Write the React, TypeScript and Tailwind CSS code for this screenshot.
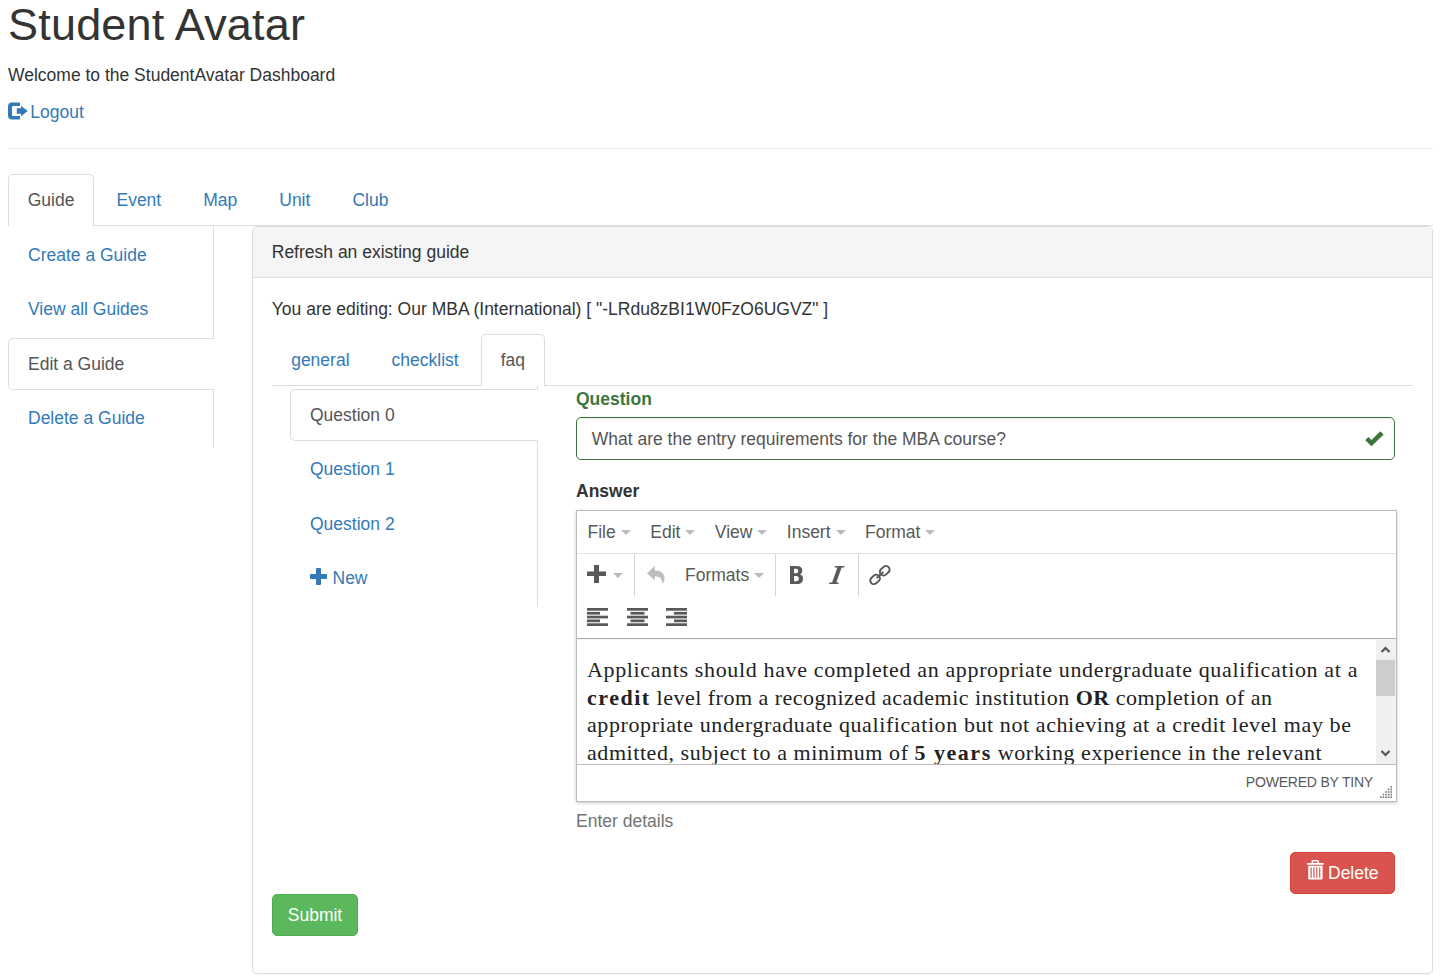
import React from "react";

const Caret = () => (
  <svg className="ml-[5px] shrink-0" width="10" height="5" viewBox="0 0 10 5">
    <path d="M0 0H10L5 5Z" fill="#b5bcc2" />
  </svg>
);

const LogoutIcon = () => (
  <svg width="20" height="18" viewBox="0 0 20 18" className="-mt-[4px] shrink-0">
    <path
      d="M12 .5V4H5Q4 4 4 5V13Q4 14 5 14H12V17.500H4Q0 17.500 0 13.500V4.500Q0 .5 4 .5Z"
      fill="#337ab7"
    />
    <path d="M13 3.800L19.800 9L13 14.200V11.800H8.800V6.300H13Z" fill="#337ab7" />
  </svg>
);

const PlusIcon = () => (
  <svg width="17" height="17" viewBox="0 0 17 17" className="-mt-[3px] shrink-0">
    <path
      d="M7 0H10Q11 0 11 1V6H16Q17 6 17 7V10Q17 11 16 11H11V16Q11 17 10 17H7Q6 17 6 16V11H1Q0 11 0 10V7Q0 6 1 6H6V1Q6 0 7 0Z"
      fill="#337ab7"
    />
  </svg>
);

const TrashIcon = () => (
  <svg width="17" height="20" viewBox="0 0 17 20" className="shrink-0">
    <path
      fillRule="evenodd"
      fill="#fff"
      d="M4.500 3V1.500Q4.500 0 6 0H10.500Q12 0 12 1.500V3H16Q16.800 3 16.800 4V4.800H0V4Q0 3 .8 3ZM6 3H10.500V1.500H6ZM1.200 5.800H15.600V18.500Q15.600 19.500 14.600 19.500H2.200Q1.200 19.500 1.200 18.500ZM3.500 7.500V17.800H4.700V7.500ZM6.300 7.500V17.800H7.500V7.500ZM9.200 7.500V17.800H10.400V7.500ZM12.100 7.500V17.800H13.300V7.500Z"
    />
  </svg>
);

const AlignIcon = ({ kind }: { kind: "left" | "center" | "right" }) => {
  const x = kind === "left" ? 0 : kind === "center" ? 3.5 : 8;
  const w = kind === "center" ? 14 : 13;
  return (
    <svg width="21" height="18" viewBox="0 0 21 18" fill="#595959">
      <rect x="0" y="0" width="21" height="2.700" />
      <rect x={x} y="3.900" width={w} height="2.700" />
      <rect x="0" y="7.700" width="21" height="2.700" />
      <rect x={x} y="11.500" width={w} height="2.700" />
      <rect x="0" y="15.300" width="21" height="2.700" />
    </svg>
  );
};

const Tab = ({ label, active, className = "" }: { label: string; active?: boolean; className?: string }) => (
  <div
    className={
      (active
        ? "h-[52px] rounded-t-[5px] border border-b-0 border-[#ddd] bg-white px-[18.75px] pt-[12.5px] text-[#555] "
        : "mr-[2.5px] h-[52px] border border-transparent px-[18.75px] pt-[12.5px] text-[#337ab7] ") + className
    }
  >
    {label}
  </div>
);

const SideItem = ({ children, active }: { children: React.ReactNode; active?: boolean }) => (
  <div
    className={
      active
        ? "mb-[2.4px] -mr-[1px] flex h-[52px] items-center rounded-l-[5px] border border-r-0 border-[#ddd] bg-white pl-[19px] text-[#555]"
        : "mb-[2.4px] flex h-[52px] items-center pl-[20px] text-[#337ab7]"
    }
  >
    {children}
  </div>
);

const Menu = ({ label, className }: { label: string; className: string }) => (
  <div className={`flex items-center ${className}`}>
    {label}
    <Caret />
  </div>
);

export default function App() {
  return (
    <div className="h-[980px] w-[1446px] overflow-hidden bg-white pl-2 pr-[13px] font-['Liberation_Sans',Arial,sans-serif] text-[17.5px] leading-[25px] text-[#333]">
      <h1 className="h-[63px] text-[45px] leading-[49.5px] tracking-[0.2px]">Student Avatar</h1>
      <p>Welcome to the StudentAvatar Dashboard</p>
      <a className="mt-[12px] flex h-[25px] items-center text-[#337ab7]">
        <LogoutIcon />
        <span className="ml-[2.300px]">Logout</span>
      </a>
      <hr className="mt-[23px] border-0 border-t border-[#eee]" />

      <nav className="mt-[25px] flex h-[52px] shadow-[inset_0_-1px_0_#ddd]">
        <Tab label="Guide" active className="mr-[2.5px]" />
        <Tab label="Event" />
        <Tab label="Map" />
        <Tab label="Unit" />
        <Tab label="Club" />
      </nav>

      <div className="flex items-start">
        <aside className="w-[206px] shrink-0 border-r border-[#ddd] pt-[3px]">
          <SideItem>Create a Guide</SideItem>
          <SideItem>View all Guides</SideItem>
          <SideItem active>
            <span className="pt-[1px]">Edit a Guide</span>
          </SideItem>
          <SideItem>Delete a Guide</SideItem>
        </aside>

        <main className="ml-[38px] h-[748px] w-[1181px] rounded-[5px] border border-[#ddd] shadow-[0_1px_1px_rgba(0,0,0,0.05)]">
          <header className="h-[51px] rounded-t-[4px] border-b border-[#ddd] bg-[#f5f5f5] pl-[18.75px] pt-[12.5px]">
            Refresh an existing guide
          </header>
          <div className="px-[19px] pt-[18.500px]">
            <p className="-ml-[0.25px] h-[37.500px]">
              You are editing: Our MBA (International) [ "-LRdu8zBI1W0FzO6UGVZ" ]
            </p>
            <nav className="flex h-[52px] shadow-[inset_0_-1px_0_#ddd]">
              <Tab label="general" className="-ml-[0.6px]" />
              <Tab label="checklist" />
              <Tab label="faq" active className="w-[64px]" />
            </nav>

            <div className="flex h-[508px] items-start">
              <aside className="ml-[18px] w-[248px] shrink-0 border-r border-[#ddd] pt-[3px]">
                <SideItem active>Question 0</SideItem>
                <SideItem>Question 1</SideItem>
                <SideItem>
                  <span className="pt-[1px]">Question 2</span>
                </SideItem>
                <SideItem>
                  <PlusIcon />
                  <span className="ml-[5.500px]">New</span>
                </SideItem>
              </aside>

              <section className="ml-[38px] w-[821px]">
                <div className="h-[31px] pt-[1px] font-bold text-[#3c763d]">Question</div>
                <div className="flex h-[43px] w-[819px] items-center justify-between rounded-[5px] border border-[#3c763d] pl-[14.700px] pr-[10.500px] text-[#555] shadow-[inset_0_1px_1px_rgba(0,0,0,0.075)]">
                  <span className="pt-[1px]">What are the entry requirements for the MBA course?</span>
                  <svg width="19" height="16" viewBox="0 0 19 16">
                    <path d="M3.300 6L6.500 9L15.300 .3L18.700 3.600L6.500 15.300L.2 9.300Z" fill="#3c763d" />
                  </svg>
                </div>
                <div className="mt-[18px] h-[32px] pt-[1px] font-bold">Answer</div>

                <div className="h-[292px] border border-[#bcbcbc] text-[#595959] shadow-[0_1px_3px_rgba(0,0,0,0.22)]">
                  <div className="flex h-[43px] items-center border-b border-[#e2e2e2] pl-[10.500px]">
                    <Menu label="File" className="w-[62.800px]" />
                    <Menu label="Edit" className="w-[64.500px]" />
                    <Menu label="View" className="w-[72px]" />
                    <Menu label="Insert" className="w-[78.200px]" />
                    <Menu label="Format" className="w-[90px]" />
                  </div>
                  <div className="flex h-[42px] items-center">
                    <div className="flex h-full w-[58px] items-center border-r border-[#d5d5d5] pl-[10px]">
                      <svg className="-mt-[2px]" width="19" height="18" viewBox="0 0 19 18">
                        <path d="M7 0H12V6.500H19V11H12V18H7V11H0V6.500H7Z" fill="#595959" />
                      </svg>
                      <span className="ml-[2px]">
                        <Caret />
                      </span>
                    </div>
                    <div className="flex h-full w-[141px] items-center border-r border-[#d5d5d5] pl-[12px]">
                      <svg width="18" height="18" viewBox="0 0 18 18">
                        <path
                          d="M0 7.300L7.800 0V4.500C14.500 4.500 17.600 8 17.600 12.300C17.600 14.600 16.700 16.500 15.300 18C15.700 13.200 13.300 10.500 7.800 10.300V14.600Z"
                          fill="#bdbdbd"
                        />
                      </svg>
                      <span className="ml-[20px] flex items-center">
                        Formats
                        <Caret />
                      </span>
                    </div>
                    <div className="flex h-full w-[83px] items-center border-r border-[#d5d5d5] pl-[14px]">
                      <svg width="13" height="18" viewBox="0 0 13 18">
                        <path
                          d="M0 0H7C10.500 0 12.300 1.700 12.300 4.500C12.300 6.400 11.400 7.700 9.900 8.300C12 8.900 13 10.500 13 12.700C13 16.100 10.800 18 7.200 18H0ZM4 2.700V7.200H6C7.500 7.200 8.200 6.300 8.200 5C8.200 3.500 7.500 2.700 6 2.700ZM4 10V15.200H6.200C8 15.200 8.900 14.200 8.900 12.600C8.900 10.900 8 10 6.200 10Z"
                          fill="#595959"
                          fillRule="evenodd"
                        />
                      </svg>
                      <svg className="ml-[26px]" width="16" height="18" viewBox="0 0 16 18">
                        <path
                          d="M6 0H15.500L15.100 1.400H12.600L7.300 16.600H9.800L9.400 18H0L.4 16.600H3.100L8.400 1.400H5.600Z"
                          fill="#595959"
                        />
                      </svg>
                    </div>
                    <svg className="ml-[10px]" width="22" height="22" viewBox="0 0 22 22" fill="none" stroke="#595959" strokeWidth="1.900">
                      <g transform="rotate(-42 11 11)">
                        <rect x="-.8" y="7.400" width="10.400" height="7.200" rx="3.400" />
                        <rect x="12.200" y="7.400" width="10.400" height="7.200" rx="3.400" />
                        <path d="M6.500 11H15.500" />
                      </g>
                    </svg>
                  </div>
                  <div className="flex h-[43px] items-center gap-[18.500px] border-b border-[#aaa] pl-[10px]">
                    <AlignIcon kind="left" />
                    <AlignIcon kind="center" />
                    <AlignIcon kind="right" />
                  </div>
                  <div className="flex h-[125px] border-t border-[#f4f4f4]">
                    <div className="h-[124px] w-[799px] overflow-hidden whitespace-nowrap pl-[10px] pt-[16px] font-['Georgia','Liberation_Serif',serif] text-[22px] leading-[27.700px] text-[#222]">
                      <div className="tracking-[0.64px]">
                        Applicants should have completed an appropriate undergraduate qualification at a
                      </div>
                      <div className="tracking-[0.49px]">
                        <b className="tracking-[1.5px]">credit</b> level from a recognized academic institution <b>OR</b> completion of an
                      </div>
                      <div className="tracking-[0.59px]">
                        appropriate undergraduate qualification but not achieving at a credit level may be
                      </div>
                      <div className="tracking-[0.56px]">
                        admitted, subject to a minimum of <b className="tracking-[1.5px]">5 years</b> working experience in the relevant
                      </div>
                    </div>
                    <div className="flex w-[20px] flex-col items-center bg-[#f0f0f0]">
                      <svg width="20" height="20" viewBox="0 0 20 20">
                        <path d="M5.500 12L9.500 8L13.500 12" fill="none" stroke="#555" strokeWidth="2.200" />
                      </svg>
                      <div className="mr-[1px] h-[36px] w-[19px] bg-[#cdcdcd]" />
                      <svg className="mt-auto" width="20" height="20" viewBox="0 0 20 20">
                        <path d="M5.500 7L9.500 11L13.500 7" fill="none" stroke="#555" strokeWidth="2.200" />
                      </svg>
                    </div>
                  </div>
                  <div className="flex h-[37px] justify-end border-t border-[#bcbcbc]">
                    <span className="pt-[5px] text-[14px] tracking-[-0.2px]">POWERED BY TINY</span>
                    <svg className="ml-[7px] mr-[4px] mt-[21px]" width="12" height="12" viewBox="0 0 12 12" fill="#777">
                      {[0, 1, 2, 3, 4].map((r) =>
                        Array.from({ length: r + 1 }, (_, c) => (
                          <rect key={`${r}-${c}`} x={10.4 - c * 2.6} y={r * 2.6} width="1.600" height="1.600" />
                        ))
                      )}
                    </svg>
                  </div>
                </div>

                <p className="mt-[7px] text-[#737373]">Enter details</p>
                <button className="ml-[714px] mt-[18px] flex h-[42px] w-[105px] items-center rounded-[5px] border border-[#d43f3a] bg-[#d9534f] pl-[16px] text-white">
                  <span className="-mt-[6px]">
                    <TrashIcon />
                  </span>
                  <span className="ml-[4px]">Delete</span>
                </button>
              </section>
            </div>
            <button className="flex h-[42px] w-[86px] items-center justify-center rounded-[5px] border border-[#4cae4c] bg-[#5cb85c] text-white">
              Submit
            </button>
          </div>
        </main>
      </div>
    </div>
  );
}
